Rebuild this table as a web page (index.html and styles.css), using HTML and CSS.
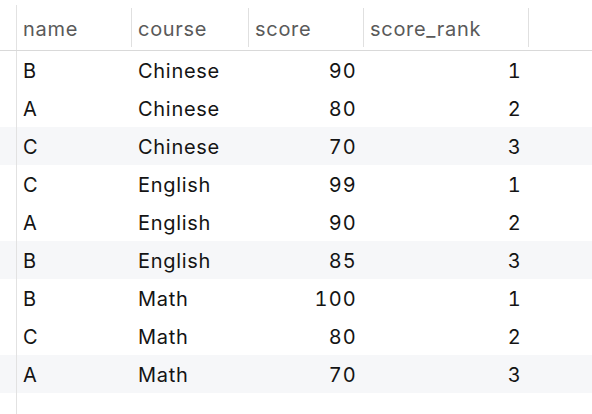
FILE: index.html
```html
<!DOCTYPE html>
<html>
<head>
<meta charset="utf-8">
<link rel="stylesheet" href="styles.css">
</head>
<body>
<div class="grid">
  <div class="row head">
    <div class="gutter"></div>
    <div class="hc">name</div>
    <div class="hc">course</div>
    <div class="hc">score</div>
    <div class="hc">score_rank</div>
    <div class="rest"></div>
  </div>
  <div class="row"><div class="gutter"></div><div class="c">B</div><div class="c">Chinese</div><div class="c num">90</div><div class="c num">1</div><div class="rest"></div></div>
  <div class="row"><div class="gutter"></div><div class="c">A</div><div class="c">Chinese</div><div class="c num">80</div><div class="c num">2</div><div class="rest"></div></div>
  <div class="row alt"><div class="gutter"></div><div class="c">C</div><div class="c">Chinese</div><div class="c num">70</div><div class="c num">3</div><div class="rest"></div></div>
  <div class="row"><div class="gutter"></div><div class="c">C</div><div class="c">English</div><div class="c num">99</div><div class="c num">1</div><div class="rest"></div></div>
  <div class="row"><div class="gutter"></div><div class="c">A</div><div class="c">English</div><div class="c num">90</div><div class="c num">2</div><div class="rest"></div></div>
  <div class="row alt"><div class="gutter"></div><div class="c">B</div><div class="c">English</div><div class="c num">85</div><div class="c num">3</div><div class="rest"></div></div>
  <div class="row"><div class="gutter"></div><div class="c">B</div><div class="c">Math</div><div class="c num">100</div><div class="c num">1</div><div class="rest"></div></div>
  <div class="row"><div class="gutter"></div><div class="c">C</div><div class="c">Math</div><div class="c num">80</div><div class="c num">2</div><div class="rest"></div></div>
  <div class="row alt"><div class="gutter"></div><div class="c">A</div><div class="c">Math</div><div class="c num">70</div><div class="c num">3</div><div class="rest"></div></div>
  <div class="row filler"><div class="gutter"></div></div>
</div>
</body>
</html>
```
FILE: styles.css
```css
html, body {
  margin: 0;
  padding: 0;
  background: #ffffff;
}
body {
  width: 592px;
  height: 414px;
  overflow: hidden;
  font-family: "Inter", "Liberation Sans", sans-serif;
  font-size: 20px;
  letter-spacing: 0.7px;
}
.grid {
  display: flex;
  flex-direction: column;
  height: 414px;
}
.row {
  display: grid;
  grid-template-columns: 17px 115px 117px 115px 165px 1fr;
  height: 38px;
}
.row.alt {
  background: #f6f7f9;
}
.row.head {
  height: 50px;
  border-bottom: 1px solid #d9d9d9;
}
.row.filler {
  flex: 1;
}
.gutter {
  border-right: 1px solid #e2e2e2;
}
.head .gutter {
  margin-top: 5px;
}
.hc {
  display: flex;
  align-items: center;
  margin: 8px 0 3px;
  padding: 3px 0 0 6px;
  border-right: 1px solid #e0e0e0;
  color: #5a5a5a;
}
.c {
  display: flex;
  align-items: center;
  padding: 2px 8px 0 6px;
  color: #141414;
}
.c.num {
  justify-content: flex-end;
  font-variant-numeric: tabular-nums;
  letter-spacing: 1.2px;
  padding-right: 7px;
}
```
